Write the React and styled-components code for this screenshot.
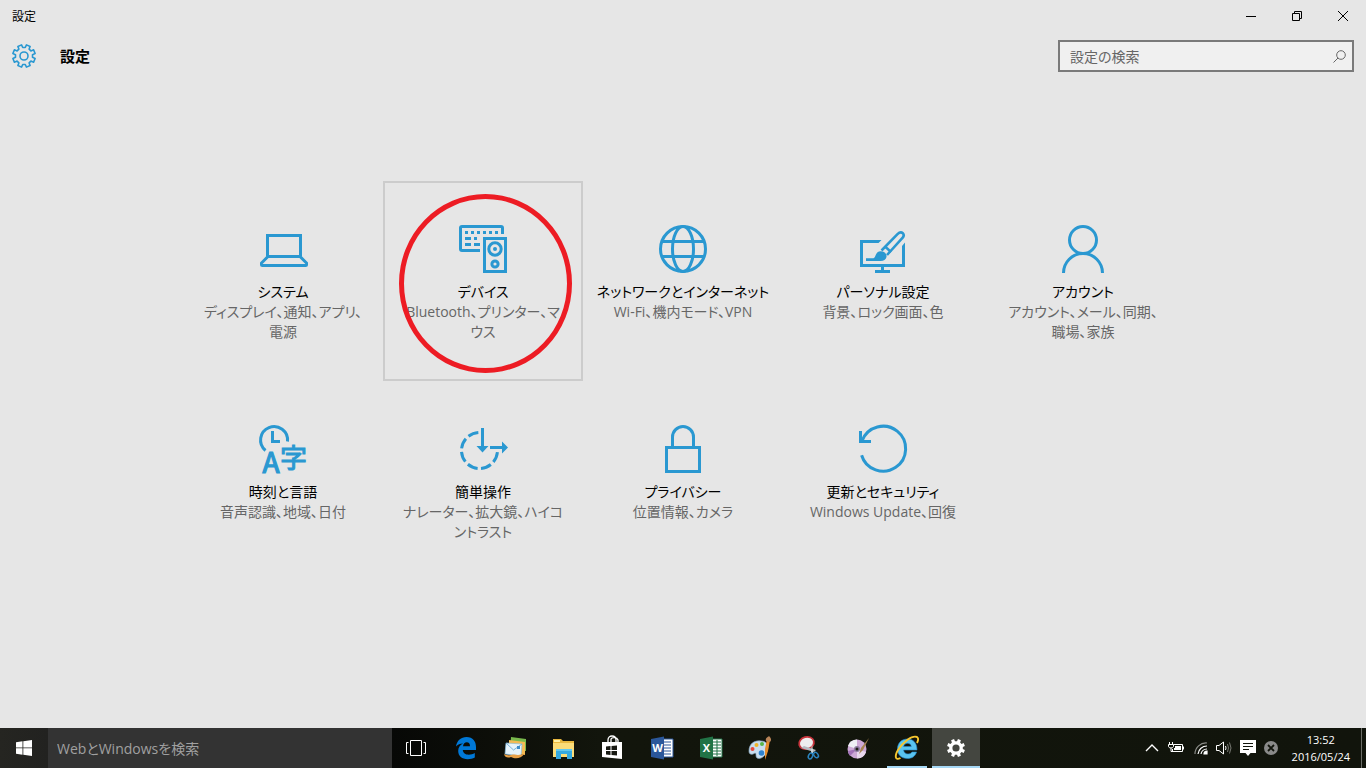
import React from "react";
import styled, { createGlobalStyle, css } from "styled-components";

const GlobalStyle = createGlobalStyle`
  * {
    box-sizing: border-box;
  }

  body {
    margin: 0;
    background-color: #e6e6e6;
    color: #000000;
    font-family: "Open Sans", "Noto Sans CJK JP", sans-serif;
    font-size: 14px;
    font-feature-settings: "palt";
  }

  button,
  input {
    font: inherit;
    font-feature-settings: inherit;
  }

  svg {
    display: block;
    overflow: visible;
  }
`;

const Page = styled.div`
  display: flex;
  flex-direction: column;
  min-height: 100vh;
`;

/* Window title bar */
const TitleBar = styled.div`
  display: flex;
  justify-content: space-between;
  align-items: center;
  height: 32px;
  padding-left: 12px;
  font-size: 12px;
`;

const WindowControls = styled.div`
  display: flex;
`;

const WindowButton = styled.button`
  display: flex;
  justify-content: center;
  align-items: center;
  width: 46px;
  height: 32px;
  padding: 0;
  border: none;
  background: none;
`;

/* Page header with the search box */
const Header = styled.header`
  display: flex;
  align-items: center;
  height: 48px;
  padding: 0 12px;
`;

const Heading = styled.h1`
  flex: 1;
  margin: 0 0 0 24px;
  font-size: 15px;
  font-weight: 700;
  line-height: 20px;
`;

const SearchBox = styled.label`
  display: flex;
  align-items: center;
  width: 296px;
  height: 32px;
  padding: 0 6px 0 10px;
  border: 2px solid #7a7a7a;
  background-color: #f0f0f0;
`;

const SearchInput = styled.input`
  flex: 1;
  min-width: 0;
  padding: 0;
  border: none;
  outline: none;
  background: none;
  font-size: 14px;

  &::placeholder {
    color: #666666;
    opacity: 1;
  }
`;

/* Category tiles */
const Main = styled.main`
  flex: 1;
  padding-top: 101px;
`;

const TileGrid = styled.nav`
  display: grid;
  grid-template-columns: repeat(auto-fill, 200px);
  justify-content: center;
  max-width: 1000px;
  margin: 0 auto;
`;

const Tile = styled.a`
  position: relative;
  display: flex;
  flex-direction: column;
  align-items: center;
  height: 200px;
  padding-top: 42px;
  border: 2px solid ${(props) => (props.$hovered ? "#cccccc" : "transparent")};
  text-align: center;
  text-decoration: none;
  white-space: nowrap;
  line-height: 20px;
`;

const TileTitle = styled.span`
  margin-top: 9px;
  color: #000000;
  font-size: 14px;
`;

const TileText = styled.span`
  color: #666666;
  font-size: 14px;
`;

const Marker = styled.div`
  position: absolute;
  top: 11px;
  left: 14px;
  width: 173px;
  height: 179px;
  border: 5px solid #ed1c24;
  border-radius: 50%;
`;

/* Taskbar */
const Taskbar = styled.footer`
  display: flex;
  height: 40px;
  background: linear-gradient(90deg, #252521 0, #222220 48px, #070806 392px, #12150c 600px, #11140c 100%);
`;

const TaskButton = styled.button`
  display: flex;
  justify-content: center;
  align-items: center;
  width: 48px;
  height: 40px;
  padding: 0;
  border: none;
  background: none;
  ${(props) =>
    props.$open &&
    css`
      background: linear-gradient(#a6d8f5, #a6d8f5) center bottom / 40px 2px no-repeat;
    `}
  ${(props) =>
    props.$active &&
    css`
      background-color: #444640;
      box-shadow: inset 0 -2px #a6d8f5;
    `}
`;

const TaskSearch = styled.input`
  width: 344px;
  padding: 0 9px;
  border: none;
  outline: none;
  background-color: #333333;
  font-size: 14px;

  &::placeholder {
    color: #a0a0a0;
    opacity: 1;
  }
`;

const TaskApps = styled.div`
  display: flex;
  gap: 1px;
  margin-left: 1px;
`;

const Tray = styled.div`
  display: flex;
  align-items: center;
  gap: 8px;
  margin-left: auto;
`;

const Clock = styled.time`
  margin: 0 3px 0 6px;
  color: #ffffff;
  font-size: 11px;
  line-height: 17px;
  text-align: center;
`;

const ShowDesktop = styled.button`
  width: 5px;
  height: 40px;
  padding: 0;
  border: none;
  border-left: 1px solid #6b6d67;
  background: none;
`;

/* Points of an eight-toothed gear around (12, 12) */
const gearPath = () => {
  const points = [];
  for (let i = 0; i < 8; i++) {
    const mid = 22.5 + i * 45;
    [
      [-14, 8.6],
      [-10, 11.4],
      [10, 11.4],
      [14, 8.6],
    ].forEach(([offset, radius]) => {
      const angle = ((mid + offset) * Math.PI) / 180;
      points.push(
        `${(12 + radius * Math.cos(angle)).toFixed(2)} ${(12 + radius * Math.sin(angle)).toFixed(2)}`
      );
    });
  }
  return `M${points.join("L")}Z`;
};

const GearOutline = () => (
  <svg width="24" height="24" viewBox="0 0 24 24" fill="none" stroke="#2a98d1" strokeWidth="1.600">
    <path d={gearPath()} strokeLinejoin="round" />
    <circle cx="12" cy="12" r="4" />
  </svg>
);

const TileIcon = ({ children }) => (
  <svg width="48" height="48" viewBox="0 0 48 48" fill="none" stroke="#2a98d1" strokeWidth="3" aria-hidden="true">
    {children}
  </svg>
);

const SystemIcon = () => (
  <TileIcon>
    <path d="M8.5 31.5V10.5H41.5V31.5" />
    <path d="M9 31.5H41L47.5 38V39.5Q47.5 40.5 46.5 40.5H3.5Q2.5 40.5 2.5 39.5V38Z" />
  </TileIcon>
);

const DevicesIcon = () => (
  <TileIcon>
    <path d="M21 25.5H3Q1.5 25.5 1.5 24V3Q1.5 1.5 3 1.5H42Q43.5 1.5 43.5 3V9" />
    <path d="M6 7.5h33" strokeDasharray="3 3" />
    <path d="M6 13.5h6M15 13.5h3M6 19.5h6M15 19.5h6" />
    <path d="M25.5 13.5H46.5V46.5H25.5Z" />
    <circle cx="36" cy="24" r="6.2" />
    <circle cx="36" cy="24" r="2" fill="#2a98d1" stroke="none" />
    <circle cx="36" cy="39" r="3.1" />
  </TileIcon>
);

const NetworkIcon = () => (
  <TileIcon>
    <circle cx="24" cy="24" r="22.5" />
    <ellipse cx="24" cy="24" rx="10.5" ry="22.5" />
    <path d="M3 16.5H45M3 31.5H45" />
  </TileIcon>
);

const PersonalIcon = () => (
  <TileIcon>
    <path d="M22.500 15H1V42H46V17.500L43 21V39H4V18H19.500Z" fill="#2a98d1" stroke="none" />
    <path d="M23.5 41V46M16 46.5H31" />
    <path d="M22.500 25.500L38.500 9.200Q41.500 6.200 43.800 8.200Q46 10.500 43 13.500L28 30" strokeWidth="2.600" />
    <path d="M26 21.500L32 27" strokeWidth="2.400" />
    <path d="M7 33.2H14.5Q16 32.5 16.5 30.5Q18 26 22 26.2Q28 27 27.500 32Q26.500 36 21.5 36H7Z" fill="#2a98d1" stroke="none" />
  </TileIcon>
);

const AccountIcon = () => (
  <TileIcon>
    <circle cx="24" cy="15" r="13.5" />
    <path d="M4.5 48A19.5 19.5 0 0 1 43.5 48" />
  </TileIcon>
);

const TimeIcon = () => (
  <TileIcon>
    <path d="M6.5 25.5A13.5 13.5 0 1 1 28.5 16.5" />
    <path d="M13.5 6V16.5H21" />
    <g fill="#2a98d1" fontFamily='"Noto Sans CJK JP", sans-serif'>
      <text x="3.500" y="47.500" fontSize="28" strokeWidth="1.200">
        A
      </text>
      <text x="21" y="42.500" fontSize="27" strokeWidth="1">
        字
      </text>
    </g>
  </TileIcon>
);

const EaseIcon = () => (
  <TileIcon>
    <path d="M38.5 25.5A18 18 0 1 1 20.5 7.5" strokeDasharray="10.6 3.54" strokeDashoffset="-1.77" />
    <path d="M23.5 3V22M31 22.5H44" />
    <path d="M17.5 21H29.5L23.5 27.5ZM43 16.5L49 22.5L43 28.5Z" fill="#2a98d1" stroke="none" />
  </TileIcon>
);

const PrivacyIcon = () => (
  <TileIcon>
    <path d="M7.5 22.5H40.5V46.5H7.5Z" />
    <path d="M13.5 22V12A10.5 10.5 0 0 1 34.5 12V22" />
  </TileIcon>
);

const UpdateIcon = () => (
  <TileIcon>
    <path d="M2.6 30.2A22.5 22.5 0 1 0 3.2 15.5" />
    <path d="M1.5 6V16.5H12" />
  </TileIcon>
);

const categories = [
  { icon: SystemIcon, title: "システム", lines: ["ディスプレイ、通知、アプリ、", "電源"] },
  { icon: DevicesIcon, title: "デバイス", lines: ["Bluetooth、プリンター、マ", "ウス"], marked: true },
  { icon: NetworkIcon, title: "ネットワークとインターネット", lines: ["Wi-Fi、機内モード、VPN"] },
  { icon: PersonalIcon, title: "パーソナル設定", lines: ["背景、ロック画面、色"] },
  { icon: AccountIcon, title: "アカウント", lines: ["アカウント、メール、同期、", "職場、家族"] },
  { icon: TimeIcon, title: "時刻と言語", lines: ["音声認識、地域、日付"] },
  { icon: EaseIcon, title: "簡単操作", lines: ["ナレーター、拡大鏡、ハイコ", "ントラスト"] },
  { icon: PrivacyIcon, title: "プライバシー", lines: ["位置情報、カメラ"] },
  { icon: UpdateIcon, title: "更新とセキュリティ", lines: ["Windows Update、回復"] },
];

const AppIcon = ({ children }) => (
  <svg width="24" height="24" viewBox="0 0 24 24" fill="none" aria-hidden="true">
    {children}
  </svg>
);

const TaskViewIcon = () => (
  <AppIcon>
    <path d="M5.5 4.5H16.5V19.5H5.5ZM3.5 6.5H1.5V17.5H3.5M18.5 6.5H20.5V17.5H18.5" stroke="#ffffff" />
  </AppIcon>
);

const EdgeIcon = () => (
  <AppIcon>
    <path
      d="M2 10.5C3 4.500 7 1 12.500 1C19 1 22 5.500 22 11V14H8.800C9 17 11.500 18.700 14.700 18.700C17 18.700 19 18 20.800 17V21.500C18.800 22.700 16.500 23.200 13.700 23.200C8 23.200 4.200 20 4.200 15C4.200 11.500 6 9 9 7.600C6 7.600 3.700 8.600 2 10.500ZM9 10.200H16C16 7.700 14.900 6.200 12.800 6.200C10.800 6.200 9.400 7.700 9 10.200Z"
      fill="#0078d7"
      fillRule="evenodd"
    />
  </AppIcon>
);

const MailIcon = () => (
  <AppIcon>
    <path d="M8 1L23 3V15L7 14Z" fill="#79b94d" />
    <path d="M6 4L22 6V19L6 16Z" fill="#f4ba53" />
    <path d="M3 7L19 8L18 20L2 18Z" fill="#e6f3fb" stroke="#8abfe0" strokeWidth=".7" />
    <path d="M3 7L10.500 14L19 8" stroke="#78b3d8" />
    <path d="M14 10H17V13H14Z" fill="#3d8cca" />
    <path d="M1 18C6 21 9 17 15 19L21 18C18 23 12 23 8 21C5 22 2 22 1 18Z" fill="#e9a148" />
  </AppIcon>
);

const ExplorerIcon = () => (
  <AppIcon>
    <path d="M1 3H9L11 5H22V21H1Z" fill="#e9b83f" />
    <path d="M2 4H8V6H2Z" fill="#fff1a8" />
    <path d="M1 7H22V21H1Z" fill="#fbdc78" />
    <path d="M4 13H20V23H15V18H9V23H4Z" fill="#35a9e0" />
    <path d="M4 13H20V15H4Z" fill="#62c8ef" />
  </AppIcon>
);

const StoreIcon = () => (
  <AppIcon>
    <path d="M7 7V4C7 1 9 0 11 0C13 0 15 1 15 4V7M10 6V3C11 1 16 1 17 4V6" stroke="#ffffff" strokeWidth="1.300" />
    <path d="M1 6H21V23L1 21Z" fill="#ffffff" />
    <path d="M5 10.500L9.500 10V14H5ZM10.500 10L16 9.500V14H10.500ZM5 15H9.500V19L5 18.500ZM10.500 15H16V19.600L10.500 19Z" fill="#171912" />
  </AppIcon>
);

const OfficeIcon = ({ color, letter, sheet }) => (
  <AppIcon>
    <path d="M12 3H23V21H12Z" fill="#ffffff" stroke={color} />
    <path
      d={sheet ? "M14 6H22M14 9H22M14 12H22M14 15H22M14 18H22M18 4V20" : "M14 6H21M14 9H21M14 12H21M14 15H21M14 18H21"}
      stroke={color}
    />
    <path d="M1 3L14 0.500V23.500L1 21Z" fill={color} />
    <text x="7.500" y="16" textAnchor="middle" fill="#ffffff" fontFamily="Open Sans, sans-serif" fontSize="11" fontWeight="700">
      {letter}
    </text>
  </AppIcon>
);

const PaintIcon = () => (
  <AppIcon>
    <path d="M1 15C1 8 6 4 13 5C19 5 21 10 19 15C18 19 13 24 9 22C7 20 9 17 7 17C4 19 1 19 1 15Z" fill="#c9def0" stroke="#8aa8c0" strokeWidth=".7" />
    <circle cx="4.500" cy="13" r="2" fill="#e8483c" />
    <circle cx="8.500" cy="9" r="2" fill="#efb52b" />
    <circle cx="14" cy="8" r="2" fill="#57b548" />
    <circle cx="13.500" cy="17" r="2.800" fill="#2e83d0" />
    <path d="M22 4L20 15L17 24L17 13L19 3Z" fill="#e58c2c" />
    <path d="M18 5C17 2 20 1 21 0C23 2 24 4 22 6Z" fill="#b98458" />
  </AppIcon>
);

const SnippingIcon = () => (
  <AppIcon>
    <ellipse cx="9.500" cy="7" rx="7.500" ry="6" transform="rotate(-15 9.500 7)" fill="#eeeeee" stroke="#c9343c" strokeWidth="1.800" />
    <path d="M4 12L17 16L19 14L7 10Z" fill="#b4bbc0" />
    <path d="M15 7L16 17L14 17Z" fill="#dce3e8" />
    <ellipse cx="13.500" cy="20" rx="2" ry="3" transform="rotate(25 13.500 20)" stroke="#2b83bd" strokeWidth="1.500" />
    <ellipse cx="19" cy="19" rx="2" ry="3" transform="rotate(-35 19 19)" stroke="#2b83bd" strokeWidth="1.500" />
  </AppIcon>
);

const DiscIcon = () => (
  <AppIcon>
    <circle cx="11" cy="13" r="9.500" fill="#cda8d6" />
    <path d="M11 13L2 10A9.500 9.500 0 0 1 11 3.500Z" fill="#eef0f5" />
    <path d="M11 13L20 16A9.500 9.500 0 0 1 11 22.500Z" fill="#e9d8ed" />
    <path d="M11 13L4 20A9.500 9.500 0 0 1 2 15Z" fill="#a271b8" />
    <circle cx="11" cy="13" r="3" fill="#8d7ba0" />
    <circle cx="11" cy="13" r="1.500" fill="#202018" />
    <path d="M23 2L17 14L13 18L15 12Z" fill="#a6834f" />
  </AppIcon>
);

const ExplorerEIcon = () => (
  <AppIcon>
    <path
      d="M2.500 13C2.500 7 6.500 3 12.500 3C18.500 3 22 7 22 14H8.500C9 16.500 10.500 18 13 18C15 18 16.200 17.200 17 16H21.600C20 20.500 17 22.500 12.500 22.500C6.500 22.500 2.500 18.800 2.500 13ZM8.600 10.500H16.300C16 8.500 14.600 7.300 12.500 7.300C10.500 7.300 9.100 8.500 8.600 10.500Z"
      fill="#59c4ef"
      stroke="#2589cf"
      strokeWidth=".6"
      fillRule="evenodd"
    />
    <path d="M5.500 22C0 25-.5 20 3 14C8 6 17-1 22 1C23.500 2 23 5 22 7" stroke="#f6c62f" strokeWidth="1.900" />
  </AppIcon>
);

const SettingsIcon = () => (
  <AppIcon>
    <g transform="translate(2.400 2.400) scale(.8)">
      <path d={gearPath()} fill="#ffffff" />
      <circle cx="12" cy="12" r="4.500" fill="#444640" />
    </g>
  </AppIcon>
);

const apps = [
  { name: "タスク ビュー", icon: <TaskViewIcon /> },
  { name: "Microsoft Edge", icon: <EdgeIcon /> },
  { name: "メール", icon: <MailIcon /> },
  { name: "エクスプローラー", icon: <ExplorerIcon /> },
  { name: "ストア", icon: <StoreIcon /> },
  { name: "Word", icon: <OfficeIcon color="#2b579a" letter="W" /> },
  { name: "Excel", icon: <OfficeIcon color="#217346" letter="X" sheet /> },
  { name: "ペイント", icon: <PaintIcon /> },
  { name: "Snipping Tool", icon: <SnippingIcon /> },
  { name: "DVD", icon: <DiscIcon /> },
  { name: "Internet Explorer", icon: <ExplorerEIcon />, open: true },
  { name: "設定", icon: <SettingsIcon />, active: true },
];

const TrayIcons = () => (
  <>
    <svg width="14" height="16" viewBox="0 0 14 16" fill="none" stroke="#ffffff" strokeWidth="1.400">
      <path d="M0 11L6 5L12 11" />
    </svg>
    <svg width="16" height="16" viewBox="0 0 16 16" fill="none" stroke="#ffffff">
      <path d="M5.500 4.500H14.500V11.500H4.500V9M15.500 6.500V9.500M1.500 2V4M4.500 2V4M.5 4.500H5.500V6.500Q5 8 3 8Q1 8 .5 6.500ZM3 8V11.500H5" />
      <path d="M7 6H13V10H6V8H7Z" fill="#ffffff" stroke="none" />
    </svg>
    <svg width="16" height="16" viewBox="0 0 16 16" fill="none" stroke="#ffffff" strokeWidth="1.200">
      <path d="M3 14A11 11 0 0 1 15 3" stroke="#8b8c88" />
      <path d="M6 14A9 9 0 0 1 15 6M9 14A6 6 0 0 1 15 9" />
      <path d="M12 14A3 3 0 0 1 15 11V14Z" fill="#ffffff" />
    </svg>
    <svg width="16" height="16" viewBox="0 0 16 16" fill="none" stroke="#ffffff">
      <path d="M.5 5.500H3L7.500 2V14L3 10.500H.5Z" />
      <path d="M9.500 6Q10.500 8 9.500 10" />
      <path d="M11.500 4Q13.500 8 11.500 12M13.500 2.500Q16.500 8 13.500 13.500" stroke="#777872" />
    </svg>
    <svg width="16" height="16" viewBox="0 0 16 16">
      <path d="M0 0H16V13H10.500L8 16L5.500 13H0Z" fill="#ffffff" />
      <path d="M3 3.500H13M3 6.500H13M3 9.500H9" stroke="#11140c" />
    </svg>
    <svg width="14" height="14" viewBox="0 0 14 14">
      <circle cx="7" cy="7" r="7" fill="#8a8a8a" />
      <path d="M4 4L10 10M10 4L4 10" stroke="#11140c" strokeWidth="1.800" />
    </svg>
  </>
);

const App = () => {
  return (
    <Page>
      <GlobalStyle />
      <TitleBar>
        <span>設定</span>
        <WindowControls>
          <WindowButton aria-label="最小化">
            <svg width="10" height="10" viewBox="0 0 10 10" stroke="#000000">
              <path d="M0 5.500H10" />
            </svg>
          </WindowButton>
          <WindowButton aria-label="元に戻す">
            <svg width="10" height="10" viewBox="0 0 10 10" fill="none" stroke="#000000">
              <path d="M.5 2.500H7.500V9.500H.5ZM2.500 2V.5H9.500V7.500H8" />
            </svg>
          </WindowButton>
          <WindowButton aria-label="閉じる">
            <svg width="10" height="10" viewBox="0 0 10 10" stroke="#000000">
              <path d="M0 0L10 10M10 0L0 10" />
            </svg>
          </WindowButton>
        </WindowControls>
      </TitleBar>
      <Header>
        <GearOutline />
        <Heading>設定</Heading>
        <SearchBox>
          <SearchInput type="text" placeholder="設定の検索" aria-label="設定の検索" />
          <svg width="13" height="13" viewBox="0 0 13 13" fill="none" stroke="#666666">
            <circle cx="8" cy="5" r="4.300" />
            <path d="M5 8L.5 12.500" />
          </svg>
        </SearchBox>
      </Header>
      <Main>
        <TileGrid>
          {categories.map(({ icon: Icon, title, lines, marked }) => (
            <Tile key={title} href="#" $hovered={marked}>
              <Icon />
              <TileTitle>{title}</TileTitle>
              {lines.map((line) => (
                <TileText key={line}>{line}</TileText>
              ))}
              {marked && <Marker />}
            </Tile>
          ))}
        </TileGrid>
      </Main>
      <Taskbar>
        <TaskButton aria-label="スタート">
          <svg width="16" height="16" viewBox="0 0 16 16" fill="#ffffff">
            <path d="M0 2.200L6.500 1.300V7.500H0ZM7.300 1.200L16 0V7.500H7.300ZM0 8.300H6.500V14.700L0 13.800ZM7.300 8.300H16V16L7.300 14.800Z" />
          </svg>
        </TaskButton>
        <TaskSearch type="text" placeholder="WebとWindowsを検索" aria-label="WebとWindowsを検索" />
        <TaskApps>
          {apps.map((app) => (
            <TaskButton key={app.name} aria-label={app.name} $open={app.open} $active={app.active}>
              {app.icon}
            </TaskButton>
          ))}
        </TaskApps>
        <Tray>
          <TrayIcons />
          <Clock dateTime="2016-05-24T13:52">
            13:52
            <br />
            2016/05/24
          </Clock>
          <ShowDesktop aria-label="デスクトップの表示" />
        </Tray>
      </Taskbar>
    </Page>
  );
};

export default App;
